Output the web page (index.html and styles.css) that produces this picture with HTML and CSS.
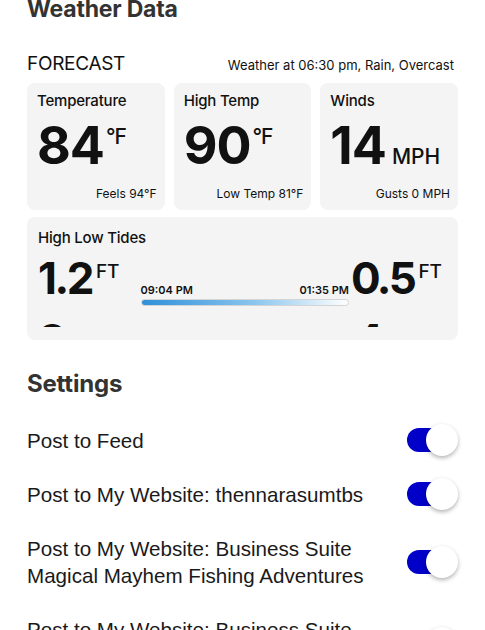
FILE: index.html
```html
<!DOCTYPE html>
<html lang="en">

<head>
    <meta charset="UTF-8">
    <meta name="viewport" content="width=device-width, initial-scale=1.0">
    <title>Weather Data</title>
    <link rel="stylesheet" href="styles.css">
</head>

<body>
    <main class="page">
        <section class="weather">
            <h1 class="section-title">Weather Data</h1>
            <div class="forecast-head">
                <span class="forecast-label">FORECAST</span>
                <span class="forecast-meta">Weather at 06:30 pm, Rain, Overcast</span>
            </div>
            <div class="stat-grid">
                <div class="stat-card">
                    <div class="stat-title">Temperature</div>
                    <div class="stat-value">84<sup class="unit">°F</sup></div>
                    <div class="stat-sub">Feels 94°F</div>
                </div>
                <div class="stat-card">
                    <div class="stat-title">High Temp</div>
                    <div class="stat-value">90<sup class="unit">°F</sup></div>
                    <div class="stat-sub">Low Temp 81°F</div>
                </div>
                <div class="stat-card">
                    <div class="stat-title">Winds</div>
                    <div class="stat-value">14<span class="unit-inline">MPH</span></div>
                    <div class="stat-sub">Gusts 0 MPH</div>
                </div>
            </div>
            <div class="tide-card">
                <div class="stat-title">High Low Tides</div>
                <div class="tide-scroll">
                    <div class="tide-row">
                        <div class="tide-value">1.2<sup class="tide-unit">FT</sup></div>
                        <div class="tide-track">
                            <div class="tide-times">
                                <span>09:04 PM</span>
                                <span>01:35 PM</span>
                            </div>
                            <div class="tide-bar"></div>
                        </div>
                        <div class="tide-value">0.5<sup class="tide-unit">FT</sup></div>
                    </div>
                    <div class="tide-row">
                        <div class="tide-value">3</div>
                        <div class="tide-track">
                            <div class="tide-times">
                                <span>03:12 AM</span>
                                <span>07:48 AM</span>
                            </div>
                            <div class="tide-bar"></div>
                        </div>
                        <div class="tide-value tide-value-end">4</div>
                    </div>
                </div>
            </div>
        </section>

        <section class="settings">
            <h2 class="section-title">Settings</h2>
            <ul class="setting-list">
                <li class="setting-row">
                    <span class="setting-label">Post to Feed</span>
                    <span class="toggle"><span class="track"></span><span class="knob"></span></span>
                </li>
                <li class="setting-row">
                    <span class="setting-label">Post to My Website: thennarasumtbs</span>
                    <span class="toggle"><span class="track"></span><span class="knob"></span></span>
                </li>
                <li class="setting-row">
                    <span class="setting-label">Post to My Website: Business Suite Magical Mayhem Fishing Adventures</span>
                    <span class="toggle"><span class="track"></span><span class="knob"></span></span>
                </li>
                <li class="setting-row">
                    <span class="setting-label">Post to My Website: Business Suite Magical Mayhem Charters</span>
                    <span class="toggle off"><span class="track"></span><span class="knob"></span></span>
                </li>
            </ul>
        </section>
    </main>
</body>

</html>
```

FILE: styles.css
```css
body {
    margin: 0;
    background: #fff;
    color: #111;
    font-family: Inter, "Liberation Sans", Arial, sans-serif;
}

.page {
    padding: 0 27px;
    height: 630px;
    overflow: hidden;
}

.section-title {
    margin: 0;
    font-size: 23px;
    line-height: 30px;
    font-weight: 700;
    color: #333;
    letter-spacing: -0.2px;
}

.weather .section-title {
    margin-top: -6px;
}

.forecast-head {
    display: flex;
    justify-content: space-between;
    align-items: baseline;
    margin-top: 28px;
    padding-right: 4px;
}

.forecast-label {
    font-size: 19px;
    letter-spacing: -0.3px;
}

.forecast-meta {
    font-size: 13px;
}

.stat-grid {
    display: grid;
    grid-template-columns: repeat(3, 1fr);
    gap: 9px;
    margin-top: 8px;
}

.stat-card,
.tide-card {
    background: #f4f4f4;
    border-radius: 8px;
}

.stat-card {
    display: flex;
    flex-direction: column;
    height: 127px;
    padding: 8px 8px 8px 10px;
    box-sizing: border-box;
}

.stat-title {
    font-size: 15px;
    font-weight: 500;
    line-height: 20px;
    letter-spacing: -0.2px;
}

.stat-value {
    margin-top: 12px;
    font-size: 52px;
    font-weight: 700;
    line-height: 46px;
    letter-spacing: -1px;
    white-space: nowrap;
}

.unit {
    font-size: 21px;
    font-weight: 500;
    vertical-align: top;
    position: relative;
    top: -9px;
    margin-left: 2px;
}

.unit-inline {
    font-size: 21px;
    font-weight: 500;
    margin-left: 6px;
    letter-spacing: 0;
}

.stat-sub {
    margin-top: auto;
    text-align: right;
    font-size: 12px;
    line-height: 16px;
}

.tide-card {
    margin-top: 7px;
    height: 123px;
    padding: 11px 16px 0 11px;
    box-sizing: border-box;
}

.tide-scroll {
    height: 79px;
    overflow: hidden;
}

.tide-row {
    display: flex;
    align-items: flex-end;
    height: 50px;
    margin-bottom: 12px;
}

.tide-value {
    font-size: 44px;
    font-weight: 700;
    line-height: 40px;
    letter-spacing: -2.5px;
    white-space: nowrap;
}

.tide-value-end {
    width: 88px;
}

.tide-unit {
    font-size: 19px;
    font-weight: 500;
    vertical-align: top;
    position: relative;
    top: -6px;
    margin-left: 4px;
    letter-spacing: 0;
}

.tide-track {
    flex: 1;
    margin: 0 2px -8px 21px;
}

.tide-row + .tide-row .tide-track {
    visibility: hidden;
}

.tide-times {
    display: flex;
    justify-content: space-between;
    font-size: 11px;
    font-weight: 600;
    line-height: 14px;
}

.tide-bar {
    margin-top: 2px;
    height: 5px;
    border: 1px solid #d4d4d4;
    border-radius: 4px;
    background: linear-gradient(to right, #2e90da, #8cc6ee 55%, #fff);
}

.settings .section-title {
    margin-top: 29px;
    font-size: 24px;
}

.setting-list {
    list-style: none;
    margin: 14px 0 0;
    padding: 0;
}

.setting-row {
    display: flex;
    align-items: center;
    justify-content: space-between;
    gap: 30px;
    padding: 13.5px 0;
}

.setting-label {
    font-family: "Liberation Sans", Arial, sans-serif;
    font-size: 20.6px;
    line-height: 27px;
    color: #1a1a1a;
}

.toggle {
    display: flex;
    align-items: center;
    flex-shrink: 0;
    height: 27px;
}

.track {
    width: 38px;
    height: 24px;
    border-radius: 12px;
    background: #0000c8;
}

.knob {
    width: 32px;
    height: 32px;
    margin-left: -19px;
    border-radius: 50%;
    background: #fff;
    box-shadow: 0 2px 4px rgba(0, 0, 0, 0.3);
}

.toggle.off .track {
    background: #e6e6e6;
}
```
